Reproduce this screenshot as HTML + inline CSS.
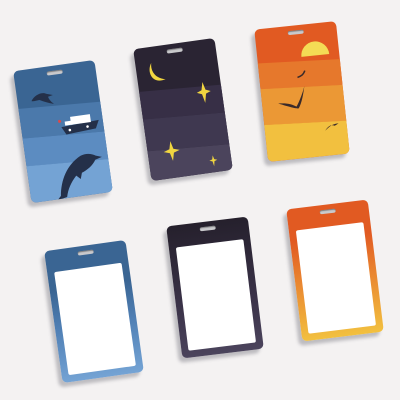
<!DOCTYPE html>
<html><head><style>
html,body{margin:0;padding:0;width:400px;height:400px;overflow:hidden;background:#f4f2f2;font-family:"Liberation Sans",sans-serif}
.c{position:absolute;width:82px;height:133px;border-radius:5px;overflow:hidden;box-shadow:-4px 4px 3px rgba(90,90,100,.35)}
.slot{position:absolute;left:33px;top:5px;width:16px;height:4px;border-radius:2px;background:#c9c9cc;box-shadow:inset 0 1px 1px rgba(0,0,0,.4);z-index:3}
.b{position:absolute;left:-10px;width:120%;transform:rotate(3deg)}
.w{position:absolute;left:7px;right:7px;top:22px;bottom:7px;background:#fff;border-radius:2px;z-index:2}
svg{position:absolute;left:0;top:0;z-index:2}
</style></head><body>

<!-- top blue -->
<div class="c" style="left:22px;top:65px;transform:rotate(-8deg);background:#3a6593">
<div class="b" style="top:40px;height:30px;background:#4b79ab"></div>
<div class="b" style="top:70px;height:28px;background:#5c8cc1"></div>
<div class="b" style="top:98px;height:50px;background:#74a3d4"></div>
<div class="slot"></div>
<svg width="82" height="133"><path d="M14 32C18 26 26 24 30 27L36 29L31 30C32 34 34 36 36 38C30 36 26 34 22 32C19 32 16 33 14 32Z" fill="#243049"/>
<path d="M30 130C32 115 40 100 55 93C60 91 66 92 70 95L76 97L69 99C66 104 60 108 54 110L52 116L48 112C42 118 38 124 36 132L26 134Z" fill="#243049"/>
<path d="M40 62L78 60L74 68L44 70Z" fill="#243049"/><rect x="50" y="53" width="20" height="8" fill="#fff"/><rect x="44" y="57" width="8" height="4" fill="#fff"/>
<circle cx="48" cy="66" r="1.3" fill="#fff"/><circle cx="66" cy="65" r="1.3" fill="#fff"/><circle cx="39" cy="56" r="1.5" fill="#e04848"/></svg>
</div>

<!-- top dark -->
<div class="c" style="left:142px;top:43px;transform:rotate(-8deg);background:#2a2433">
<div class="b" style="top:45px;height:28px;background:#372f46"></div>
<div class="b" style="top:73px;height:32px;background:#3f3850"></div>
<div class="b" style="top:105px;height:40px;background:#4b445c"></div>
<div class="slot"></div>
<svg width="82" height="133"><path d="M16 16c-6 8-2 22 12 18-10-2-14-10-12-18z" fill="#f1d640"/>
<path d="M64 42l2 8 5 2-5 2-2 9-2-9-5-2 5-2z" fill="#f1d640"/>
<path d="M24 96l2 8 6 2-6 2-2 8-2-8-6-2 6-2z" fill="#f1d640"/>
<path d="M64 116l1 4 3 1-3 1-1 5-1-5-3-1 3-1z" fill="#f1d640"/></svg>
</div>

<!-- top orange -->
<div class="c" style="left:261px;top:25px;transform:rotate(-6deg);background:#e15a22">
<div class="b" style="top:36px;height:26px;background:#e6782c"></div>
<div class="b" style="top:62px;height:36px;background:#eb9835"></div>
<div class="b" style="top:98px;height:45px;background:#f2c03f"></div>
<div class="slot"></div>
<svg width="82" height="133"><path d="M44 32a14 14 0 1 1 28 0z" fill="#f4dc55"/>
<path d="M16 76c8 0 14 2 18 5 4-6 8-14 10-20-2 8-4 16-8 22-3 0-8-2-20-7z" fill="#3a2a2a"/>
<path d="M38 52c4-1 6-2 8-6" stroke="#3a2a2a" stroke-width="1.5" fill="none"/>
<path d="M60 108c3-4 6-6 10-4l4-2c-4 0-7 0-14 6z" fill="#3a2a2a"/></svg>
</div>

<!-- bottom blue -->
<div class="c" style="left:53px;top:245px;transform:rotate(-8deg);background:linear-gradient(#3a6593 0,#3a6593 30%,#5080b5 60%,#74a3d4 100%)"><div class="slot"></div><div class="w"></div></div>

<!-- bottom dark -->
<div class="c" style="left:174px;top:221px;transform:rotate(-7deg);background:linear-gradient(#25202c,#3a3248 60%,#4b445c)"><div class="slot"></div><div class="w"></div></div>

<!-- bottom orange -->
<div class="c" style="left:294px;top:204px;transform:rotate(-7deg);background:linear-gradient(#e15a22 0,#e15a22 25%,#e98530 55%,#f2c03f 100%)"><div class="slot"></div><div class="w"></div></div>

</body></html>
